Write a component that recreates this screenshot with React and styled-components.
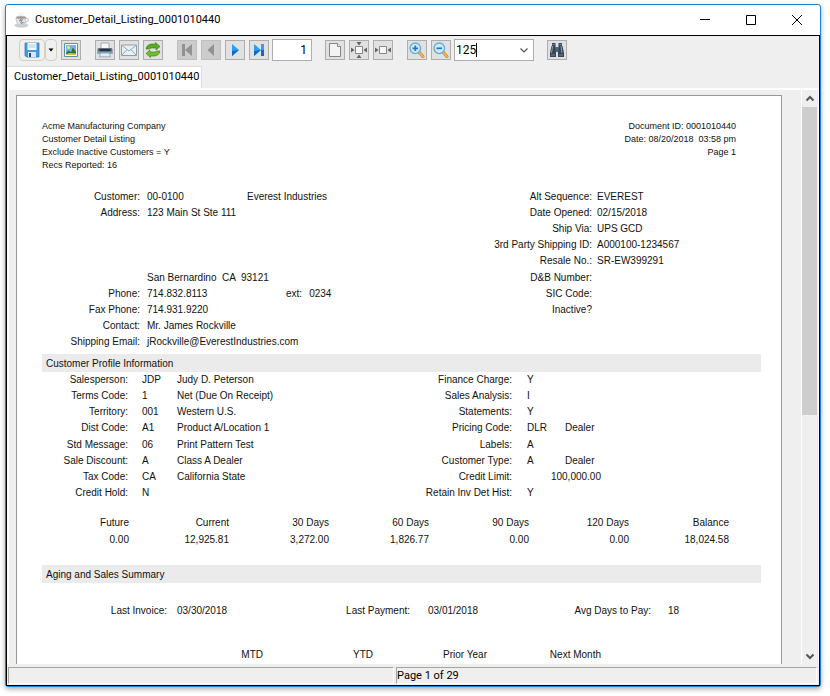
import React, { useState } from 'react';
import styled, { createGlobalStyle } from 'styled-components';

const GlobalStyle = createGlobalStyle`
  * {
    box-sizing: border-box;
  }

  body {
    margin: 0;
    background: white;
    color: #000;
    font-family: Roboto, 'Open Sans', sans-serif;
    font-size: 11px;
  }
`;

const Desktop = styled.div`
  height: 100vh;
  padding: 4px 9px 9px 5px;
`;

const Window = styled.div`
  display: flex;
  flex-direction: column;
  height: 100%;
  background: white;
  border: 1px solid #1883d7;
  border-radius: 3px;
  box-shadow: 0 2px 5px rgba(0, 0, 0, 0.35);
`;

const TitleBar = styled.header`
  display: flex;
  align-items: center;
  height: 30px;
  padding-left: 8px;
`;

const WindowTitle = styled.h1`
  flex: 1;
  margin: 0 0 0 5px;
  font-size: 11px;
  font-weight: 400;
  line-height: 16px;
`;

const CaptionButton = styled.button`
  display: flex;
  align-items: center;
  justify-content: center;
  width: 46px;
  height: 30px;
  padding: 0;
  border: none;
  background: transparent;
`;

const Client = styled.div`
  display: flex;
  flex: 1;
  flex-direction: column;
  min-height: 0;
  border: 1px solid #000;
  background: #efefef;
`;

const Toolbar = styled.div`
  display: flex;
  align-items: center;
  gap: 13px;
  height: 28px;
  padding-left: 12px;
  margin-bottom: 2px;
`;

const ToolGroup = styled.div`
  display: flex;
  align-items: center;
  gap: ${props => props.gap || '4px'};
`;

const ToolButton = styled.button`
  display: flex;
  align-items: center;
  justify-content: center;
  width: 20px;
  height: 20px;
  padding: 0;
  border: 1px solid ${props => (props.disabled ? '#bfbfbf' : '#adadad')};
  background: ${props => (props.disabled ? '#cccccc' : '#e1e1e1')};
`;

const SplitButton = styled.button`
  display: flex;
  align-items: center;
  justify-content: center;
  width: ${props => props.width};
  height: 22px;
  padding: 0;
  border: 1px solid #d0d0c4;
  border-radius: 4px;
  background: #f0f0ee;
`;

const PageInput = styled.input`
  width: 40px;
  height: 22px;
  padding: 0 4px;
  border: 1px solid #abadb3;
  background: white;
  font: inherit;
  font-size: 12px;
  text-align: right;
`;

const Combo = styled.div`
  position: relative;
  display: flex;
  width: 80px;
  height: 22px;
  border: 1px solid #abadb3;
  background: white;
`;

const ComboInput = styled.input`
  flex: 1;
  min-width: 0;
  padding: 0 1px;
  border: none;
  outline: none;
  background: transparent;
  font: inherit;
  font-size: 12px;
`;

const ComboButton = styled.button`
  display: flex;
  align-items: center;
  justify-content: center;
  width: 18px;
  padding: 0;
  border: none;
  background: transparent;
`;

const Caret = styled.span`
  position: absolute;
  top: 3px;
  left: 21px;
  width: 1px;
  height: 14px;
  background: #000;
`;

const TabStrip = styled.div`
  display: flex;
  height: 22px;
`;

const Tab = styled.button`
  height: 22px;
  padding: 0 2px 2px 7px;
  border: 1px solid #dcdcdc;
  border-width: 1px 1px 0 0;
  background: white;
  font: inherit;
`;

const Viewer = styled.main`
  display: flex;
  flex: 1;
  min-height: 0;
  border: solid white;
  border-width: 2px 1px 0 2px;
`;

const Canvas = styled.div`
  display: flex;
  flex: 1;
  min-width: 0;
  padding: 5px 19px 0 7px;
  overflow: hidden;
`;

const Sheet = styled.article`
  flex: 1;
  min-width: 0;
  padding: 24px 20px 0 25px;
  border: 1px solid #999;
  border-bottom: none;
  background: white;
  color: #111;
  font-family: 'Liberation Sans', Arial, sans-serif;
  font-size: 10px;
  line-height: 16px;
`;

const ScrollBar = styled.div`
  display: flex;
  flex-direction: column;
  width: 17px;
  padding-right: 1px;
  border-left: 1px solid white;
`;

const ScrollButton = styled.button`
  display: flex;
  align-items: center;
  justify-content: center;
  height: 17px;
  padding: 0;
  border: none;
  background: transparent;
`;

const ScrollTrack = styled.div`
  flex: 1;
`;

const ScrollThumb = styled.div`
  height: 57%;
  background: #cdcdcd;
`;

const ReportHeader = styled.div`
  display: flex;
  justify-content: space-between;
  margin-bottom: 17px;
  padding-right: 25px;
  font-size: 9px;
  line-height: 13px;
`;

const HeaderLines = styled.div`
  text-align: ${props => props.align || 'left'};
  white-space: pre;
`;

const Columns = styled.section`
  display: flex;
`;

const FieldColumn = styled.div`
  flex: ${props => (props.width ? `0 0 ${props.width}` : '1')};
  min-width: 0;
`;

const FieldGroup = styled.div`
  margin-bottom: ${props => props.gap || '0'};
`;

const FieldRow = styled.div`
  display: grid;
  grid-template-columns: ${props => props.columns};
  height: 16px;
  white-space: pre;
`;

const Label = styled.span`
  padding-right: ${props => props.space || '0'};
  text-align: right;
`;

const Amount = styled.span`
  grid-column: 2 / 4;
  width: 74px;
  text-align: right;
`;

const Extension = styled.span`
  display: flex;
  gap: 7px;
  padding-left: 39px;
`;

const Band = styled.h2`
  height: 18px;
  margin: ${props => props.space} 0 0;
  padding: 2px 4px 0;
  background: #ebebeb;
  font-size: 10px;
  font-weight: 400;
  line-height: 16px;
`;

const AgingTable = styled.table`
  width: calc(100% - 32px);
  margin-top: 12px;
  border-collapse: collapse;
  table-layout: fixed;
  line-height: 17px;

  th,
  td {
    padding: 0;
    font-weight: 400;
    text-align: right;
  }

  th:first-child {
    width: 87px;
  }
`;

const SalesTable = styled.table`
  margin-top: 28px;
  border-collapse: collapse;
  table-layout: fixed;

  th {
    width: 114px;
    padding: 0;
    font-weight: 400;
    text-align: right;
  }

  th:first-child {
    width: 221px;
  }

  th:nth-child(2) {
    width: 110px;
  }
`;

const PaymentRow = styled.section`
  display: grid;
  grid-template-columns: 135px 1fr 141px 1fr 130px 93px;
  margin-top: 20px;
`;

const StatusBar = styled.footer`
  display: flex;
  gap: 2px;
  height: 21px;
  padding: 3px 2px 1px 1px;
`;

const StatusCell = styled.div`
  flex: ${props => props.grow};
  border: 1px solid white;
  border-top-color: #a7a698;
  border-left-color: #a7a698;
  line-height: 16px;
`;

const Drawing = ({ children, size = 16 }) => (
  <svg width={size} height={size} viewBox={`0 0 ${size} ${size}`} aria-hidden="true">
    {children}
  </svg>
);

const CoffeeIcon = () => (
  <Drawing>
    <ellipse cx="7.5" cy="13.3" rx="6.5" ry="1.9" fill="#d3d3d3" stroke="#b4b4b4" strokeWidth="0.5" />
    <path d="M2 5.500c0 5 2 7.500 5 7.500s5-2.500 5-7.500z" fill="#e6e6e6" stroke="#b4b4b4" strokeWidth="0.7" />
    <path d="M11.500 6.500c4-1 4 3-0.700 4" fill="none" stroke="#b4b4b4" />
    <ellipse cx="7" cy="5.500" rx="5" ry="1.500" fill="#a3918a" stroke="#c8c8c8" strokeWidth="0.7" />
    <path d="M5 9c2-1.500 3 0 2 1.500s2 1 2.500-.5M6 8h3" fill="none" stroke="#4e7f9c" />
    <path d="M6 3c-1-1 1-1.300 0-2.500M8.500 3c-1-1 1-1.300 0-2.500" fill="none" stroke="#ddd" strokeWidth="0.7" />
  </Drawing>
);

const SaveIcon = () => (
  <Drawing>
    <path d="M1 1h14v14H2.500L1 13.500z" fill="#3d9be4" stroke="#2277bd" strokeWidth="0.7" />
    <path d="M3.500 1h9v7h-9z" fill="#f4f8fb" />
    <path d="M4.500 3h7M4.500 5h7" stroke="#a8bdcc" strokeWidth="0.8" />
    <path d="M4 10h8v5H4z" fill="#dce5ec" />
    <path d="M5 11h2v4H5z" fill="#274c6b" />
  </Drawing>
);

const DropIcon = () => (
  <Drawing size={6}>
    <path d="M0.500 1.500h5L3 4.500z" fill="#000" />
  </Drawing>
);

const PictureIcon = () => (
  <Drawing>
    <path d="M1.500 1.500h13v13h-13z" fill="#fff" stroke="#5b8ea8" />
    <path d="M3 3h10v10H3z" fill="#69b9ee" />
    <circle cx="5.500" cy="5.500" r="1.500" fill="#ffe46a" />
    <path d="M3 11l2.500-2.500L8 10l2-4.500L13 10v3H3z" fill="#2f713b" />
    <path d="M3 12l4-1 6 .5V13H3z" fill="#d6c33c" />
  </Drawing>
);

const PrintIcon = () => (
  <Drawing>
    <path d="M4 1h8v6H4z" fill="#f4f6f8" stroke="#849099" strokeWidth="0.700" />
    <path d="M1.500 6h13l1 1v5h-15V7z" fill="#607385" />
    <path d="M2.500 7h11v2.500h-11z" fill="#253441" />
    <path d="M1 9.500h14V12H1z" fill="#8fa3b6" />
    <path d="M3.500 11h9l1 3.800h-11z" fill="#dcedfb" stroke="#7c93a6" strokeWidth="0.700" />
  </Drawing>
);

const MailIcon = () => (
  <Drawing>
    <path d="M.5 3h15v10.500H.5z" fill="#e8f0f6" stroke="#8aa0b1" />
    <path d="M1 3.500l7 5.500 7-5.500M1 13l5-5.500M15 13l-5-5.500" fill="none" stroke="#94a9b8" />
  </Drawing>
);

const RefreshIcon = () => (
  <Drawing>
    <path
      d="M1 7C1.500 3.500 4 2 7 2h3.500V.5L15 4.500 11 8V6H8C6 6 5 6 4.500 7z"
      fill="#59ac20"
      stroke="#37780f"
      strokeWidth="0.600"
    />
    <path
      d="M15 9c-.5 3.500-3 5-6 5H5.500v1.500L1 11.500 5 8v2h3c2 0 3 0 3.500-1z"
      fill="#70bd2c"
      stroke="#37780f"
      strokeWidth="0.600"
    />
  </Drawing>
);

const FirstIcon = () => (
  <Drawing>
    <path d="M3 2h3v12H3zM13 2v12L6 8z" fill="#929292" />
  </Drawing>
);

const PreviousIcon = () => (
  <Drawing>
    <path d="M11 2v12L4.500 8z" fill="#929292" />
  </Drawing>
);

const NextIcon = () => (
  <Drawing>
    <path d="M5 2v12l7-6z" fill="#2f9df4" />
    <path d="M5 14V9l7-1z" fill="#0f68cc" />
  </Drawing>
);

const LastIcon = () => (
  <Drawing>
    <path d="M3 2v12l7-6zM10 2h3v12h-3z" fill="#2f9df4" />
    <path d="M3 14V9l7-1zM10 8h3v6h-3z" fill="#0f68cc" />
  </Drawing>
);

const ActualSizeIcon = () => (
  <Drawing>
    <path d="M2.500 1.500h8l3 3v10h-11z" fill="#f3f3f3" stroke="#858585" />
    <path d="M10.500 1.500v3h3" fill="#fff" stroke="#858585" />
  </Drawing>
);

const FitPageIcon = () => (
  <Drawing>
    <path d="M4.500 4.500h7v7h-7z" fill="#f7f7f7" stroke="#888" />
    <path d="M5.500 0h5L8 3.500zM5.500 16h5L8 12.500zM0 5.500v5L3.500 8zM16 5.500v5L12.500 8z" fill="#626262" />
  </Drawing>
);

const FitWidthIcon = () => (
  <Drawing>
    <path d="M4.500 4.500h7v7h-7z" fill="#f7f7f7" stroke="#888" />
    <path d="M0 5.500v5L3.500 8zM16 5.500v5L12.500 8z" fill="#626262" />
  </Drawing>
);

const ZoomIcon = ({ plus }) => (
  <Drawing>
    <path d="M9.500 9.500l4.500 5" stroke="#c9832c" strokeWidth="3" strokeLinecap="round" />
    <path d="M9.500 9.500l4.500 5" stroke="#ffb446" strokeWidth="1.800" strokeLinecap="round" />
    <circle cx="6.300" cy="6.300" r="5.300" fill="#cdeafd" stroke="#66acd8" strokeWidth="1.300" />
    <path d={plus ? 'M3.500 6.300h5.600M6.300 3.500v5.600' : 'M3.500 6.300h5.600'} stroke="#2a73bd" strokeWidth="1.700" />
  </Drawing>
);

const FindIcon = () => (
  <Drawing>
    <path d="M3 1h3.500v3L7 7v8H1v-4l1.500-7H3zM9.500 1H13v3h.5l1.500 7v4H9V7l.5-3z" fill="#354656" />
    <path d="M6.500 5h3v5h-3z" fill="#526577" />
    <path d="M3.700 4L2.500 11M12 4l1 7" stroke="#8ba0b3" />
    <path d="M2 13h4M10 13h4M3.500 2.500h2M10.500 2.500h2" stroke="#72889c" />
  </Drawing>
);

const Chevron = ({ up, color = '#555', weight = 2 }) => (
  <Drawing size={10}>
    <path d={up ? 'M1.500 6.500L5 3l3.500 3.500' : 'M1.500 3.500L5 7l3.500-3.500'} fill="none" stroke={color} strokeWidth={weight} />
  </Drawing>
);

const addressFields = [
  ['Customer:', '00-0100', 'Everest Industries'],
  ['Address:', '123 Main St Ste 111'],
  [],
  [],
  [],
];

const contactFields = [
  ['', 'San Bernardino  CA  93121'],
  ['Phone:', '714.832.8113', '', '0234'],
  ['Fax Phone:', '714.931.9220'],
  ['Contact:', 'Mr. James Rockville'],
  ['Shipping Email:', 'jRockville@EverestIndustries.com'],
];

const orderFields = [
  ['Alt Sequence:', 'EVEREST'],
  ['Date Opened:', '02/15/2018'],
  ['Ship Via:', 'UPS GCD'],
  ['3rd Party Shipping ID:', 'A000100-1234567'],
  ['Resale No.:', 'SR-EW399291'],
];

const taxFields = [['D&B Number:'], ['SIC Code:'], ['Inactive?']];

const profileFields = [
  ['Salesperson:', 'JDP', 'Judy D. Peterson'],
  ['Terms Code:', '1', 'Net (Due On Receipt)'],
  ['Territory:', '001', 'Western U.S.'],
  ['Dist Code:', 'A1', 'Product A/Location 1'],
  ['Std Message:', '06', 'Print Pattern Test'],
  ['Sale Discount:', 'A', 'Class A Dealer'],
  ['Tax Code:', 'CA', 'California State'],
  ['Credit Hold:', 'N'],
];

const accountFields = [
  ['Finance Charge:', 'Y'],
  ['Sales Analysis:', 'I'],
  ['Statements:', 'Y'],
  ['Pricing Code:', 'DLR', 'Dealer'],
  ['Labels:', 'A'],
  ['Customer Type:', 'A', 'Dealer'],
  ['Credit Limit:', '100,000.00', '', true],
  ['Retain Inv Det Hist:', 'Y'],
];

const aging = [
  ['Future', '0.00'],
  ['Current', '12,925.81'],
  ['30 Days', '3,272.00'],
  ['60 Days', '1,826.77'],
  ['90 Days', '0.00'],
  ['120 Days', '0.00'],
  ['Balance', '18,024.58'],
];

const CustomerRows = ({ rows }) =>
  rows.map(([label, value, name, ext], idx) => (
    <FieldRow key={idx} columns="105px 100px 1fr">
      <Label space="7px">{label}</Label>
      <span>{value}</span>
      {ext ? (
        <Extension>
          <span>ext:</span>
          <span>{ext}</span>
        </Extension>
      ) : (
        <span>{name}</span>
      )}
    </FieldRow>
  ));

const OrderRows = ({ rows }) =>
  rows.map(([label, value]) => (
    <FieldRow key={label} columns="113px 1fr">
      <Label space="5px">{label}</Label>
      <span>{value}</span>
    </FieldRow>
  ));

const CodeRows = ({ rows, columns, space }) =>
  [rows.slice(0, 4), rows.slice(4)].map((half, idx) => (
    <FieldGroup key={idx} gap="1px">
      {half.map(([label, code, name, isAmount]) => (
        <FieldRow key={label} columns={columns}>
          <Label space={space}>{label}</Label>
          {isAmount ? <Amount>{code}</Amount> : <span>{code}</span>}
          {name && <span>{name}</span>}
        </FieldRow>
      ))}
    </FieldGroup>
  ));

function Report() {
  return (
    <Sheet>
      <ReportHeader>
        <HeaderLines>
          <div>Acme Manufacturing Company</div>
          <div>Customer Detail Listing</div>
          <div>Exclude Inactive Customers = Y</div>
          <div>Recs Reported: 16</div>
        </HeaderLines>
        <HeaderLines align="right">
          <div>Document ID: 0001010440</div>
          <div>Date: 08/20/2018  03:58 pm</div>
          <div>Page 1</div>
        </HeaderLines>
      </ReportHeader>

      <Columns>
        <FieldColumn>
          <FieldGroup gap="1px">
            <CustomerRows rows={addressFields} />
          </FieldGroup>
          <FieldGroup>
            <CustomerRows rows={contactFields} />
          </FieldGroup>
        </FieldColumn>
        <FieldColumn width="277px">
          <FieldGroup gap="1px">
            <OrderRows rows={orderFields} />
          </FieldGroup>
          <FieldGroup>
            <OrderRows rows={taxFields} />
          </FieldGroup>
        </FieldColumn>
      </Columns>

      <Band space="4px">Customer Profile Information</Band>
      <Columns>
        <FieldColumn>
          <CodeRows rows={profileFields} columns="100px 35px 1fr" space="14px" />
        </FieldColumn>
        <FieldColumn width="349px">
          <CodeRows rows={accountFields} columns="115px 38px 1fr" space="15px" />
        </FieldColumn>
      </Columns>

      <AgingTable>
        <thead>
          <tr>
            {aging.map(([period]) => (
              <th key={period}>{period}</th>
            ))}
          </tr>
        </thead>
        <tbody>
          <tr>
            {aging.map(([period, amount]) => (
              <td key={period}>{amount}</td>
            ))}
          </tr>
        </tbody>
      </AgingTable>

      <Band space="17px">Aging and Sales Summary</Band>
      <PaymentRow>
        <Label space="10px">Last Invoice:</Label>
        <span>03/30/2018</span>
        <Label space="18px">Last Payment:</Label>
        <span>03/01/2018</span>
        <Label space="17px">Avg Days to Pay:</Label>
        <span>18</span>
      </PaymentRow>

      <SalesTable>
        <thead>
          <tr>
            <th>MTD</th>
            <th>YTD</th>
            <th>Prior Year</th>
            <th>Next Month</th>
          </tr>
        </thead>
      </SalesTable>
    </Sheet>
  );
}

function App() {
  const [page, setPage] = useState('1');
  const [zoom, setZoom] = useState('125');

  return (
    <>
      <GlobalStyle />
      <Desktop>
        <Window>
          <TitleBar>
            <CoffeeIcon />
            <WindowTitle>Customer_Detail_Listing_0001010440</WindowTitle>
            <CaptionButton aria-label="Minimize">
              <Drawing size={12}>
                <path d="M1 5.500h10" stroke="#000" />
              </Drawing>
            </CaptionButton>
            <CaptionButton aria-label="Maximize">
              <Drawing size={12}>
                <path d="M1.500 1.500h9v9h-9z" fill="none" stroke="#000" />
              </Drawing>
            </CaptionButton>
            <CaptionButton aria-label="Close">
              <Drawing size={12}>
                <path d="M1 1l10 10M11 1L1 11" stroke="#000" />
              </Drawing>
            </CaptionButton>
          </TitleBar>

          <Client>
            <Toolbar>
              <ToolGroup gap="14px">
                <ToolGroup>
                  <ToolGroup gap="0px">
                    <SplitButton width="26px" aria-label="Save"><SaveIcon /></SplitButton>
                    <SplitButton width="12px" aria-label="Save options"><DropIcon /></SplitButton>
                  </ToolGroup>
                  <ToolButton aria-label="Export image"><PictureIcon /></ToolButton>
                </ToolGroup>
                <ToolGroup>
                  <ToolButton aria-label="Print"><PrintIcon /></ToolButton>
                  <ToolButton aria-label="Email"><MailIcon /></ToolButton>
                  <ToolButton aria-label="Refresh"><RefreshIcon /></ToolButton>
                </ToolGroup>
                <ToolGroup gap="3px">
                  <ToolGroup>
                    <ToolButton disabled aria-label="First page"><FirstIcon /></ToolButton>
                    <ToolButton disabled aria-label="Previous page"><PreviousIcon /></ToolButton>
                    <ToolButton aria-label="Next page"><NextIcon /></ToolButton>
                    <ToolButton aria-label="Last page"><LastIcon /></ToolButton>
                  </ToolGroup>
                  <PageInput aria-label="Page number" value={page} onChange={e => setPage(e.target.value)} />
                </ToolGroup>
              </ToolGroup>
              <ToolGroup gap="14px">
                <ToolGroup>
                  <ToolButton aria-label="Actual size"><ActualSizeIcon /></ToolButton>
                  <ToolButton aria-label="Fit page"><FitPageIcon /></ToolButton>
                  <ToolButton aria-label="Fit width"><FitWidthIcon /></ToolButton>
                </ToolGroup>
                <ToolGroup gap="3px">
                  <ToolGroup>
                    <ToolButton aria-label="Zoom in"><ZoomIcon plus /></ToolButton>
                    <ToolButton aria-label="Zoom out"><ZoomIcon /></ToolButton>
                  </ToolGroup>
                  <Combo>
                    <ComboInput aria-label="Zoom percent" value={zoom} onChange={e => setZoom(e.target.value)} />
                    <Caret />
                    <ComboButton aria-label="Zoom levels"><Chevron weight={1.2} /></ComboButton>
                  </Combo>
                </ToolGroup>
              </ToolGroup>
              <ToolButton aria-label="Find"><FindIcon /></ToolButton>
            </Toolbar>

            <TabStrip>
              <Tab>Customer_Detail_Listing_0001010440</Tab>
            </TabStrip>

            <Viewer>
              <Canvas>
                <Report />
              </Canvas>
              <ScrollBar>
                <ScrollButton aria-label="Scroll up"><Chevron up /></ScrollButton>
                <ScrollTrack>
                  <ScrollThumb />
                </ScrollTrack>
                <ScrollButton aria-label="Scroll down"><Chevron /></ScrollButton>
              </ScrollBar>
            </Viewer>

            <StatusBar>
              <StatusCell grow={11} />
              <StatusCell grow={12}>Page 1 of 29</StatusCell>
            </StatusBar>
          </Client>
        </Window>
      </Desktop>
    </>
  );
}

export default App;
